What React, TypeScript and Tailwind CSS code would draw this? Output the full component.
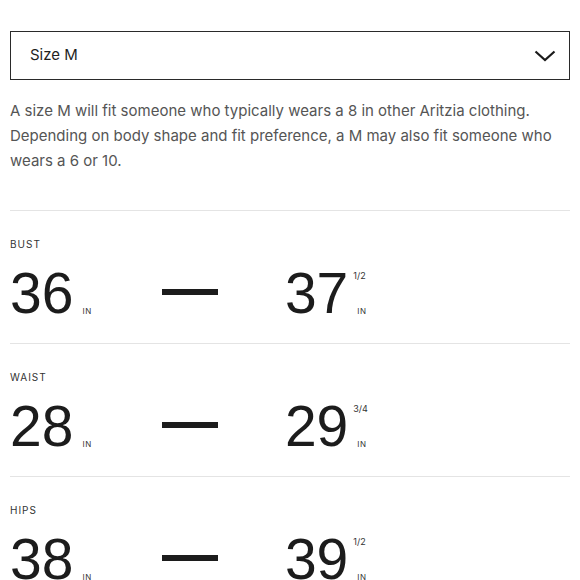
const rows = [
  { label: 'BUST', from: '36', to: '37', frac: '1/2' },
  { label: 'WAIST', from: '28', to: '29', frac: '3/4' },
  { label: 'HIPS', from: '38', to: '39', frac: '1/2' },
];

const Chevron = () => (
  <svg width="22" height="12" viewBox="0 0 22 12" fill="none" stroke="#1a1a1a" strokeWidth={2.2}>
    <polyline points="1.5,1.5 11,10 20.5,1.5" />
  </svg>
);

const Measure = ({ value, frac }: { value: string; frac?: string }) => (
  <div className="flex items-stretch">
    <span className="text-[57px] leading-none text-[#1c1c1c] font-['Liberation_Sans',Arial,sans-serif]">{value}</span>
    <div className="flex flex-col justify-between pt-[6px] pb-[7px]">
      <span className="ml-[5px] h-[9px] text-[9px] leading-none text-[#333]">{frac ?? ''}</span>
      <span className="ml-[9px] text-[8px] leading-none tracking-[0.08em] text-[#333]">IN</span>
    </div>
  </div>
);

export default function App() {
  return (
    <div className="h-[580px] w-[580px] overflow-hidden bg-white px-[10px] pt-[31px] font-['Inter',sans-serif]">
      <div className="flex h-[49px] items-center justify-between border border-[#2a2a2a] pl-[19px] pr-[13px]">
        <span className="text-[15px] text-[#1f1f1f]">Size M</span>
        <Chevron />
      </div>

      <p className="mt-[18px] text-[15px] leading-[25px] text-[#555]">
        A size M will fit someone who typically wears a 8 in other Aritzia clothing. Depending on body shape and fit
        preference, a M may also fit someone who wears a 6 or 10.
      </p>

      <div className="mt-[37px]">
        {rows.map((r) => (
          <section key={r.label} className="border-t border-[#e4e4e4] pt-[27px] pb-[21px]">
            <div className="text-[10px] leading-[12px] tracking-[0.1em] text-[#333]">{r.label}</div>
            <div className="mt-[15px] flex items-center">
              <Measure value={r.from} />
              <div className="mb-[4px] ml-[70px] mr-[67px] h-[6px] w-[56px] bg-[#1c1c1c]" />
              <Measure value={r.to} frac={r.frac} />
            </div>
          </section>
        ))}
      </div>
    </div>
  );
}
